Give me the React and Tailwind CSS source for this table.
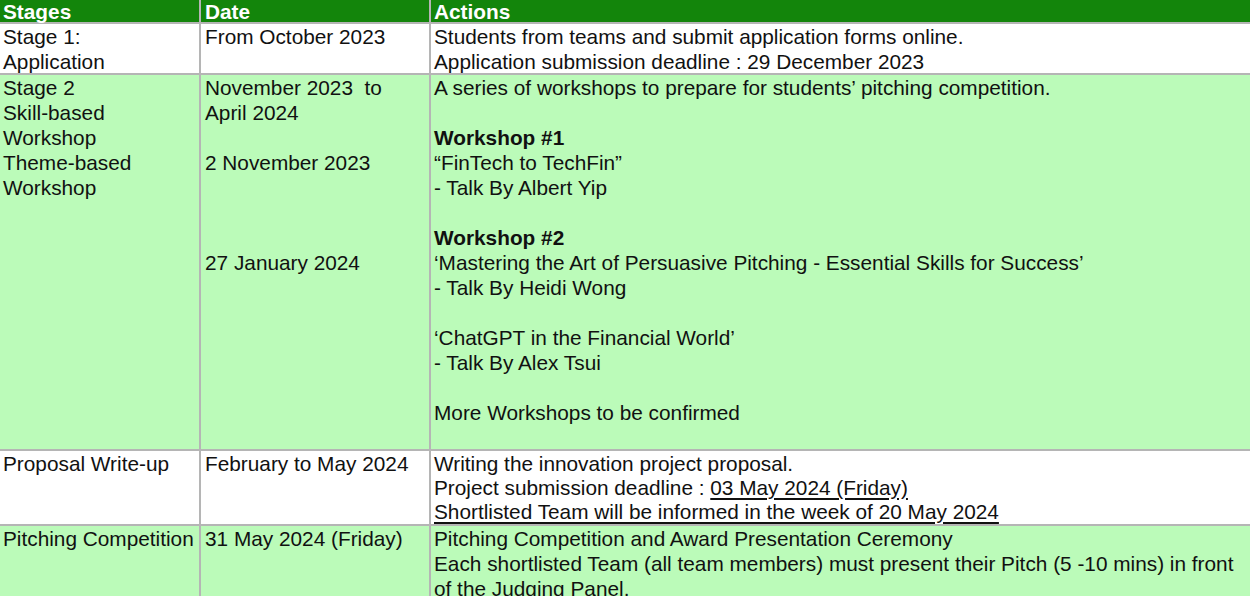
import React from 'react';

const rows = [
  {
    bg: 'bg-white',
    h: 'h-[51px]',
    stage: ['Stage 1:', 'Application'],
    date: ['From October 2023'],
    actions: [
      'Students from teams and submit application forms online.',
      'Application submission deadline : 29 December 2023',
    ],
  },
  {
    bg: 'bg-[#bbfbb9]',
    h: 'h-[376px]',
    stage: ['Stage 2', 'Skill-based', 'Workshop', 'Theme-based', 'Workshop'],
    date: ['November 2023\u00a0 to', 'April 2024', '', '2 November 2023', '', '', '', '27 January 2024'],
    actions: [
      'A series of workshops to prepare for students\u2019 pitching competition.',
      '',
      { bold: 'Workshop #1' },
      '\u201cFinTech to TechFin\u201d',
      '- Talk By Albert Yip',
      '',
      { bold: 'Workshop #2' },
      '\u2018Mastering the Art of Persuasive Pitching - Essential Skills for Success\u2019',
      '- Talk By Heidi Wong',
      '',
      '\u2018ChatGPT in the Financial World\u2019',
      '- Talk By Alex Tsui',
      '',
      'More Workshops to be confirmed',
    ],
  },
  {
    bg: 'bg-white',
    h: 'h-[75px]',
    stage: ['Proposal Write-up'],
    date: ['February to May 2024'],
    actions: [
      'Writing the innovation project proposal.',
      { pre: 'Project submission deadline : ', u: '03 May 2024 (Friday)' },
      { pre: '', u: 'Shortlisted Team will be informed in the week of 20 May 2024' },
    ],
  },
  {
    bg: 'bg-[#bbfbb9]',
    h: 'h-[80px]',
    stage: ['Pitching Competition'],
    date: ['31 May 2024 (Friday)'],
    actions: [
      'Pitching Competition and Award Presentation Ceremony',
      'Each shortlisted Team (all team members) must present their Pitch (5 -10 mins) in front',
      'of the Judging Panel.',
    ],
  },
];

const Line = ({ item }) => {
  if (item === '') return <div className="h-[25px]" />;
  if (typeof item === 'string') return <div className="whitespace-pre">{item}</div>;
  if (item.bold) return <div className="font-bold">{item.bold}</div>;
  return (
    <div className="whitespace-pre leading-[24px]">
      {item.pre}
      <span className="underline decoration-2 underline-offset-[3px]">{item.u}</span>
    </div>
  );
};

const App = () => {
  return (
    <div className="w-[1250px] h-[596px] overflow-hidden bg-white text-[20.8px] leading-[25px] text-[#111] font-['Liberation_Sans',Arial,sans-serif]">
      <div className="flex bg-[#13850b] text-white font-bold h-[24px] leading-[23px] border-b-2 border-[#b5b5b5]">
        <div className="w-[201px] pl-[3px] border-r-2 border-[#b5b5b5]">Stages</div>
        <div className="w-[230px] pl-[4px] border-r-2 border-[#b5b5b5]">Date</div>
        <div className="flex-1 pl-[3px]">Actions</div>
      </div>
      {rows.map((row, i) => (
        <div key={i} className={`flex shrink-0 border-b-2 border-[#b5b5b5] ${row.bg} ${row.h}`}>
          <div className="w-[201px] pl-[3px] border-r-2 border-[#b5b5b5]">
            {row.stage.map((s, j) => (
              <Line key={j} item={s} />
            ))}
          </div>
          <div className="w-[230px] pl-[4px] border-r-2 border-[#b5b5b5]">
            {row.date.map((s, j) => (
              <Line key={j} item={s} />
            ))}
          </div>
          <div className="flex-1 pl-[3px]">
            {row.actions.map((s, j) => (
              <Line key={j} item={s} />
            ))}
          </div>
        </div>
      ))}
    </div>
  );
};

export default App;
